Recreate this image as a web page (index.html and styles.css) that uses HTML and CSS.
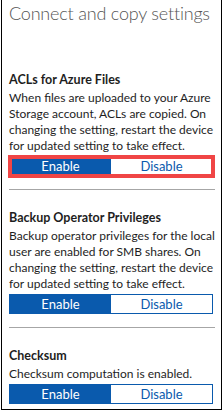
FILE: index.html
```html
<!DOCTYPE html>
<html>
<head>
<meta charset="utf-8">
<link rel="stylesheet" href="styles.css">
</head>
<body>
<div class="frame">
  <div class="title">Connect and copy settings</div>
  <div class="section first">
    <div class="heading">ACLs for Azure Files</div>
    <div class="desc">When files are uploaded to your Azure Storage account, ACLs are copied. On changing the setting, restart the device for updated setting to take effect.</div>
    <div class="toggle highlighted">
      <span class="opt on">Enable</span><span class="opt off">Disable</span>
      <span class="mark"></span>
    </div>
  </div>
  <div class="divider"></div>
  <div class="section">
    <div class="heading">Backup Operator Privileges</div>
    <div class="desc">Backup operator privileges for the local user are enabled for SMB shares. On changing the setting, restart the device for updated setting to take effect.</div>
    <div class="toggle">
      <span class="opt on">Enable</span><span class="opt off">Disable</span>
    </div>
  </div>
  <div class="divider"></div>
  <div class="section">
    <div class="heading">Checksum</div>
    <div class="desc">Checksum computation is enabled.</div>
    <div class="toggle">
      <span class="opt on">Enable</span><span class="opt off">Disable</span>
    </div>
  </div>
</div>
</body>
</html>
```
FILE: styles.css
```css
html, body {
  margin: 0;
  padding: 0;
  background: #fff;
}
body {
  font-family: Lato, "Noto Sans", sans-serif;
  color: #1e1e1e;
}
.frame {
  margin-left: 1px;
  width: 221px;
  height: 410px;
  box-sizing: border-box;
  border: 1px solid #000;
  border-top: none;
  padding: 0 4px 0 7px;
  overflow: hidden;
}
.title {
  font-weight: 300;
  font-size: 18px;
  line-height: 26px;
  color: #555;
  white-space: nowrap;
  letter-spacing: -0.2px;
}
.section {
  padding-top: 19px;
}
.section.first {
  padding-top: 0;
  margin-top: 45px;
}
.heading {
  font-weight: 700;
  font-size: 12.5px;
  line-height: 18px;
}
.desc {
  font-size: 12px;
  line-height: 16px;
  margin-top: 1px;
}
.toggle {
  position: relative;
  display: flex;
  width: 204px;
  height: 20px;
  margin-top: 2px;
  box-sizing: border-box;
  border: 1px solid #0a5aad;
  font-size: 13px;
}
.opt {
  flex: 1;
  display: flex;
  align-items: center;
  justify-content: center;
}
.opt.on {
  background: #0a5aad;
  color: #fff;
}
.opt.off {
  background: #fff;
  color: #0a5aad;
}
.mark {
  position: absolute;
  left: -2px;
  top: -2px;
  right: -3px;
  bottom: -3px;
  border: 4px solid #f04545;
}
.divider {
  height: 1px;
  background: #a6a6a6;
  margin-top: 13px;
  width: 206px;
}
```
